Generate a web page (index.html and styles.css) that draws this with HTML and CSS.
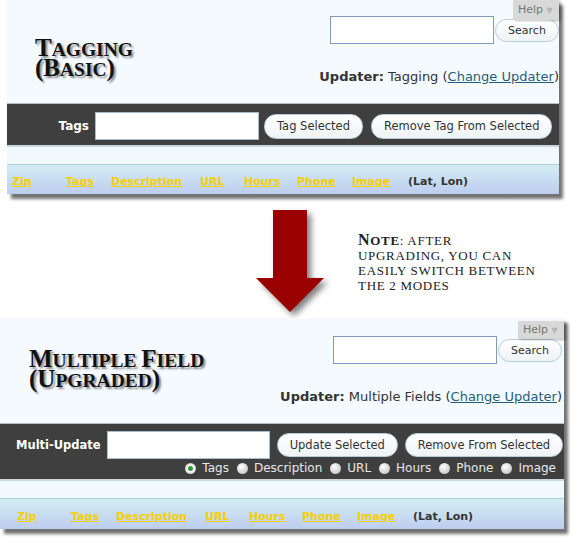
FILE: index.html
```html
<!DOCTYPE html>
<html>
<head>
<meta charset="utf-8">
<link rel="stylesheet" href="styles.css">
</head>
<body>
<div class="shot shot-top">
  <div class="head">
    <h1 class="title"><span class="line"><span class="cap">T</span>agging</span><span class="line"><span class="cap">(B</span>asic<span class="cap">)</span></span></h1>
    <div class="tools">
      <div class="search"><span class="field"></span><span class="btn btn-search">Search</span></div>
      <div class="updater"><b>Updater:</b> Tagging (<a href="#">Change Updater</a>)</div>
    </div>
    <div class="help">Help <span class="tri">▼</span></div>
  </div>
  <div class="bar">
    <span class="label">Tags</span>
    <span class="field field-bar"></span>
    <span class="btn">Tag Selected</span>
    <span class="btn">Remove Tag From Selected</span>
  </div>
  <div class="strip"></div>
  <div class="cols">
    <a href="#">Zip</a><a href="#">Tags</a><a href="#">Description</a><a href="#">URL</a><a href="#">Hours</a><a href="#">Phone</a><a href="#">Image</a><span class="latlon">(Lat, Lon)</span>
  </div>
</div>

<div class="middle">
  <svg class="arrow" width="68" height="102" viewBox="0 0 68 102">
    <polygon points="17,0 51,0 51,68 68,68 34,102 0,68 17,68" fill="#9a0000"/>
  </svg>
  <p class="note"><b><span class="big">N</span>ote</b>: after<br>upgrading, you can<br>easily switch between<br>the 2 modes</p>
</div>

<div class="shot shot-bottom">
  <div class="head">
    <h1 class="title"><span class="line"><span class="cap">M</span>ultiple <span class="cap">F</span>ield</span><span class="line"><span class="cap">(U</span>pgraded<span class="cap">)</span></span></h1>
    <div class="tools">
      <div class="search"><span class="field"></span><span class="btn btn-search">Search</span></div>
      <div class="updater"><b>Updater:</b> Multiple Fields (<a href="#">Change Updater</a>)</div>
    </div>
    <div class="help">Help <span class="tri">▼</span></div>
  </div>
  <div class="bar bar-multi">
    <div class="bar-row">
      <span class="label">Multi-Update</span>
      <span class="field field-bar"></span>
      <span class="btn">Update Selected</span>
      <span class="btn">Remove From Selected</span>
    </div>
    <div class="radios">
      <span class="opt"><span class="radio on"></span>Tags</span>
      <span class="opt"><span class="radio"></span>Description</span>
      <span class="opt"><span class="radio"></span>URL</span>
      <span class="opt"><span class="radio"></span>Hours</span>
      <span class="opt"><span class="radio"></span>Phone</span>
      <span class="opt"><span class="radio"></span>Image</span>
    </div>
  </div>
  <div class="strip"></div>
  <div class="cols">
    <a href="#">Zip</a><a href="#">Tags</a><a href="#">Description</a><a href="#">URL</a><a href="#">Hours</a><a href="#">Phone</a><a href="#">Image</a><span class="latlon">(Lat, Lon)</span>
  </div>
</div>
</body>
</html>
```

FILE: styles.css
```css
html, body {
  margin: 0;
  padding: 0;
  background: #ffffff;
}
body {
  width: 573px;
  height: 540px;
  overflow: hidden;
  font-family: "DejaVu Sans", Verdana, sans-serif;
  color: #333;
}
.shot {
  position: relative;
  background: #f4fafd;
  box-shadow: 4px 5px 3px rgba(0, 0, 0, 0.55);
}
.shot-top {
  margin-left: 7px;
  width: 552px;
}
.shot-bottom {
  width: 564px;
}
.head {
  display: flex;
  justify-content: space-between;
  box-sizing: border-box;
}
.shot-top .head {
  height: 103px;
  padding: 0 0 0 28px;
}
.shot-bottom .head {
  height: 105px;
  padding: 0 2px 0 29px;
}
.title {
  margin: 0;
  display: flex;
  flex-direction: column;
  font-family: "Liberation Serif", "Times New Roman", serif;
  font-weight: bold;
  font-size: 19.5px;
  text-transform: uppercase;
  white-space: nowrap;
  color: #111;
  text-shadow: 2px 2px 2px rgba(0, 0, 0, 0.45);
}
.title .line {
  display: block;
  height: 20px;
  line-height: 20px;
}
.title .cap {
  font-size: 25px;
  line-height: 16px;
}
.shot-top .title {
  padding-top: 40px;
}
.shot-bottom .title {
  padding-top: 33px;
}
.tools {
  display: flex;
  flex-direction: column;
  align-items: flex-end;
}
.search {
  display: flex;
  align-items: center;
  gap: 1px;
}
.shot-top .search {
  margin-top: 16px;
}
.shot-bottom .search {
  margin-top: 18px;
}
.field {
  display: block;
  box-sizing: border-box;
  width: 164px;
  height: 28px;
  background: #fff;
  border: 1px solid #7f9db9;
}
.btn {
  display: inline-flex;
  align-items: center;
  box-sizing: border-box;
  height: 25px;
  padding: 0 12px;
  border: 1px solid #b7cdd8;
  border-radius: 12px;
  background: linear-gradient(#ffffff, #eef3f5);
  font-size: 11.5px;
  color: #333;
  white-space: nowrap;
}
.btn-search {
  height: 23px;
  width: 64px;
  padding: 0;
  justify-content: center;
  font-size: 11px;
}
.updater {
  font-size: 13px;
  line-height: 16px;
  color: #333;
  margin-top: 25px;
  white-space: nowrap;
}
.updater a {
  color: #1f5f7a;
}
.help {
  position: absolute;
  right: 0;
  top: 0;
  width: 46px;
  height: 20px;
  box-sizing: border-box;
  padding-left: 5px;
  background: #d8d8d8;
  font-size: 11px;
  line-height: 20px;
  color: #777;
  box-shadow: 2px 1px 2px rgba(0, 0, 0, 0.25);
}
.shot-bottom .help {
  top: 3px;
  height: 18px;
  line-height: 18px;
}
.help .tri {
  color: #b5b5b5;
  font-size: 8px;
}
.bar {
  display: flex;
  align-items: center;
  background: #3f3f3f;
  border-top: 1px solid #b5bfc3;
  border-bottom: 2px solid #c9d7dd;
}
.shot-top .bar {
  padding: 8px 0 5px 0;
}
.label {
  color: #fff;
  font-weight: bold;
  font-size: 12px;
  white-space: nowrap;
}
.shot-top .label {
  width: 82px;
  text-align: right;
  margin-right: 6px;
}
.shot-top .bar .field {
  margin-right: 5px;
}
.shot-top .bar .btn + .btn {
  margin-left: 8px;
}
.field-bar {
  border-color: #a9bccc;
}
.bar-multi {
  flex-direction: column;
  align-items: stretch;
  padding: 7px 0 3px 0;
}
.bar-row {
  display: flex;
  align-items: center;
  padding-left: 16px;
}
.bar-row .label {
  flex: 0 0 84px;
  font-size: 11.5px;
  margin-right: 6px;
}
.bar-row .field {
  flex: 0 0 163px;
}
.bar-row .btn {
  flex: 0 0 auto;
  height: 24px;
  margin-left: 7px;
}
.radios {
  display: flex;
  justify-content: flex-end;
  gap: 8px;
  padding-right: 8px;
  margin-top: 2px;
  font-size: 12px;
  line-height: 15px;
  color: #e8e8e8;
}
.opt {
  display: inline-flex;
  align-items: center;
  gap: 6px;
}
.radio {
  display: inline-block;
  width: 11px;
  height: 11px;
  border-radius: 50%;
  background: radial-gradient(circle at 40% 35%, #ffffff, #d0d0d0 65%, #a8a8a8);
}
.radio.on {
  background: radial-gradient(circle, #2f9b35 0 2px, #ffffff 3px, #d0d0d0 70%, #a8a8a8);
}
.strip {
  height: 17px;
  background: #f2f9fc;
}
.cols {
  display: grid;
  grid-template-columns: 54px 45px 89px 44px 53px 55px 56px auto;
  border-top: 1px solid #b3d0da;
  background: linear-gradient(#d4edf4, #bdcdef);
  font-size: 11px;
  font-weight: bold;
  line-height: 14px;
}
.shot-top .cols {
  padding: 10px 0 5px 5px;
}
.shot-bottom .cols {
  padding: 11px 0 5px 17px;
}
.cols a {
  color: #f5d000;
  text-decoration: underline;
}
.latlon {
  color: #333;
}
.middle {
  display: flex;
  height: 116px;
  margin-top: 8px;
}
.arrow {
  margin-left: 256px;
  margin-top: 8px;
  filter: drop-shadow(4px 4px 3px rgba(0, 0, 0, 0.5));
}
.note {
  margin: 30px 0 0 34px;
  font-family: "Liberation Serif", "Times New Roman", serif;
  font-size: 13px;
  line-height: 15px;
  text-transform: uppercase;
  letter-spacing: 0.7px;
  color: #222;
}
.note .big {
  font-size: 16px;
}
```
